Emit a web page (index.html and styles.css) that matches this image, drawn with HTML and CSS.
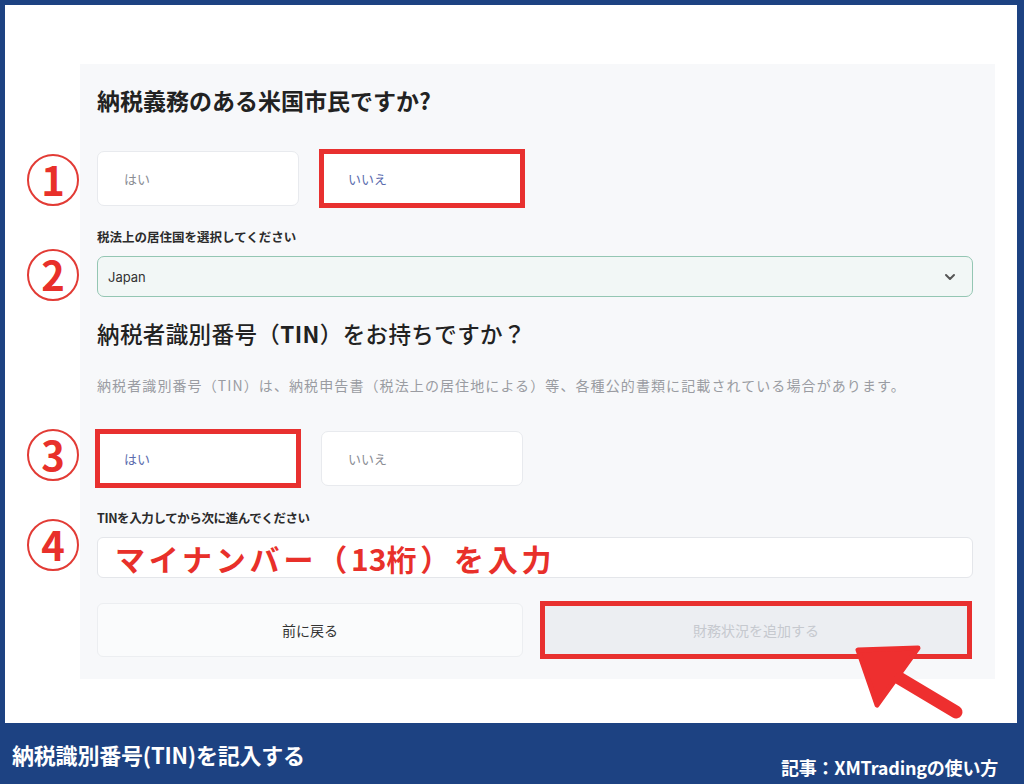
FILE: index.html
```html
<!DOCTYPE html>
<html lang="ja">
<head>
<meta charset="utf-8">
<title>納税識別番号(TIN)を記入する</title>
<link rel="stylesheet" href="styles.css">
</head>
<body>
<div class="page">
  <div class="canvas">
    <section class="panel">
      <h2 class="q1">納税義務のある米国市民ですか?</h2>
      <div class="choices row1">
        <div class="choice">はい</div>
        <div class="choice active marked">いいえ</div>
      </div>
      <div class="label l1">税法上の居住国を選択してください</div>
      <div class="select">
        <span>Japan</span>
        <svg class="chev" width="12" height="8" viewBox="0 0 12 8"><path d="M2 2 L6 6 L10 2" fill="none" stroke="#555" stroke-width="2" stroke-linecap="round" stroke-linejoin="round"/></svg>
      </div>
      <h2 class="q2">納税者識別番号（<b>TIN</b>）をお持ちですか？</h2>
      <p class="desc">納税者識別番号（TIN）は、納税申告書（税法上の居住地による）等、各種公的書類に記載されている場合があります。</p>
      <div class="choices row2">
        <div class="choice active marked">はい</div>
        <div class="choice">いいえ</div>
      </div>
      <div class="label l2">TINを入力してから次に進んでください</div>
      <div class="input"><span class="note">マイナンバー（<span class="num">13</span>桁）を入力</span></div>
      <div class="actions">
        <div class="btn back">前に戻る</div>
        <div class="btn next marked">財務状況を追加する</div>
      </div>
    </section>

    <div class="mark m1">1</div>
    <div class="mark m2">2</div>
    <div class="mark m3">3</div>
    <div class="mark m4">4</div>

    <svg class="arrow" width="130" height="90" viewBox="0 0 130 90">
      <line x1="50" y1="36" x2="112" y2="73" stroke="#ee2f2f" stroke-width="13" stroke-linecap="round"/>
      <polygon points="14,11 74,9 33,66" fill="#ee2f2f" stroke="#ee2f2f" stroke-width="5" stroke-linejoin="round"/>
    </svg>
  </div>
  <footer class="footer">
    <div class="title">納税識別番号(TIN)を記入する</div>
    <div class="credit">記事：XMTradingの使い方</div>
  </footer>
</div>
</body>
</html>
```
FILE: styles.css
```css
* { box-sizing: border-box; }
html, body { margin: 0; padding: 0; }
body {
  width: 1024px;
  height: 784px;
  overflow: hidden;
  font-family: "Inter", "Noto Sans CJK JP", "Noto Sans", sans-serif;
  color: #222;
}
.page {
  width: 1024px;
  height: 784px;
  background: #1d4282;
  display: flex;
  flex-direction: column;
  padding: 5px 7px 0 5px;
}
.canvas {
  position: relative;
  background: #ffffff;
  height: 718px;
  padding: 59px 0 0 75px;
}
.panel {
  width: 915px;
  height: 615px;
  background: #f7f8fa;
  padding: 21px 22px 22px 17px;
  display: flex;
  flex-direction: column;
}
h2 { margin: 0; }
.q1 {
  font-size: 23px;
  line-height: 30px;
  font-weight: 700;
  color: #222;
  font-family: "Noto Sans CJK JP", sans-serif;
}
.q2 {
  margin-top: 21px;
  font-size: 22.5px;
  line-height: 30px;
  font-weight: 500;
  letter-spacing: 0.4px;
  color: #222;
  font-family: "Noto Sans CJK JP", sans-serif;
}
.q2 b { font-weight: 700; }
.choices {
  display: flex;
  gap: 22px;
}
.row1 { margin-top: 36px; }
.row2 { margin-top: 36px; }
.choice {
  width: 202px;
  height: 55px;
  background: #ffffff;
  border: 1px solid #e8eaee;
  border-radius: 7px;
  display: flex;
  align-items: center;
  padding-left: 26px;
  font-size: 13px;
  color: #8a8d94;
  font-family: "Noto Sans CJK JP", sans-serif;
}
.choice.active { color: #5b6cae; }
.label {
  font-size: 12.5px;
  line-height: 18px;
  font-weight: 700;
  color: #2b2b2b;
  font-family: "Noto Sans CJK JP", sans-serif;
}
.l1 { margin-top: 22px; }
.l2 { margin-top: 23px; letter-spacing: -0.4px; }
.select {
  margin-top: 10px;
  height: 41px;
  border: 1.5px solid #94c6b3;
  border-radius: 7px;
  background: #f2f7f6;
  display: flex;
  align-items: center;
  justify-content: space-between;
  padding: 0 16px 0 10px;
  font-size: 13px;
  color: #333;
}
.desc {
  margin: 27px 0 0;
  font-size: 14px;
  line-height: 20px;
  letter-spacing: 1.1px;
  color: #9a9ca2;
  font-family: "Noto Sans CJK JP", sans-serif;
}
.input {
  margin-top: 10px;
  height: 41px;
  background: #ffffff;
  border: 1px solid #e4e6ea;
  border-radius: 6px;
  display: flex;
  align-items: center;
  padding-left: 17px;
}
.note {
  font-family: "Noto Sans CJK JP", sans-serif;
  font-weight: 700;
  font-size: 30px;
  letter-spacing: 3.8px;
  color: #e8302a;
  line-height: 1;
}
.note .num { letter-spacing: 0; }
.actions {
  margin-top: 25px;
  display: grid;
  grid-template-columns: 426px 428px;
  gap: 19px;
}
.btn {
  height: 54px;
  display: flex;
  align-items: center;
  justify-content: center;
  font-size: 14px;
  font-family: "Noto Sans CJK JP", sans-serif;
  border-radius: 6px;
}
.back {
  background: #fafbfc;
  border: 1px solid #eceef1;
  color: #333;
}
.next {
  background: #eceef2;
  color: #c6c9cf;
}
.choice.marked,
.btn.marked {
  border-radius: 0;
  outline: 5px solid #e8302f;
  outline-offset: -3px;
}
.mark {
  position: absolute;
  left: 22px;
  width: 52px;
  height: 52px;
  border: 2.5px solid #e23b35;
  border-radius: 50%;
  display: flex;
  align-items: center;
  justify-content: center;
  color: #e8302a;
  font-family: "Noto Sans CJK JP", sans-serif;
  font-weight: 700;
  font-size: 40px;
  line-height: 1;
  padding-bottom: 2px;
}
.m1 { top: 149px; }
.m2 { top: 244px; }
.m3 { top: 424px; }
.m4 { top: 514px; }
.arrow {
  position: absolute;
  left: 839px;
  top: 634px;
}
.footer {
  height: 61px;
  display: flex;
  justify-content: space-between;
  color: #ffffff;
  font-family: "Noto Sans CJK JP", sans-serif;
  font-weight: 700;
  padding: 0 19px 0 7px;
}
.title {
  font-size: 22px;
  align-self: center;
  letter-spacing: -0.2px;
}
.credit {
  font-size: 18px;
  align-self: flex-end;
  padding-bottom: 4px;
  letter-spacing: -0.2px;
}
```
